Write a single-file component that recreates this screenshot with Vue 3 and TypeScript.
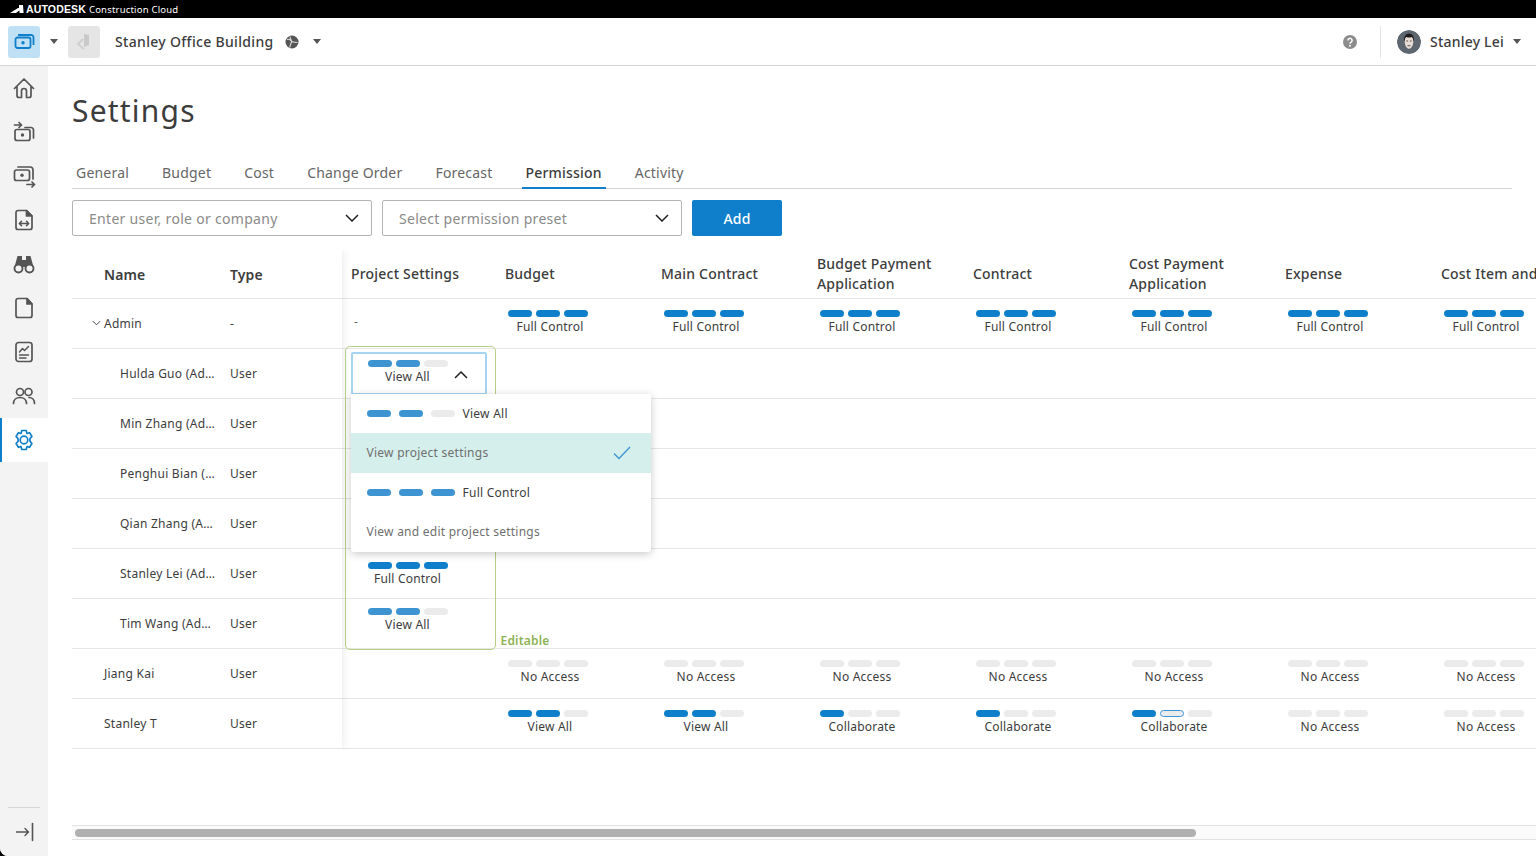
<script setup lang="ts">
type Level = 'none' | 'solid' | 'soft' | 'outline'
interface Perm { label: string; bars: Level[] }
const full: Perm = { label: 'Full Control', bars: ['solid', 'solid', 'solid'] }
const none: Perm = { label: 'No Access', bars: ['none', 'none', 'none'] }
const view: Perm = { label: 'View All', bars: ['solid', 'solid', 'none'] }
const collab: Perm = { label: 'Collaborate', bars: ['solid', 'none', 'none'] }
const collabOut: Perm = { label: 'Collaborate', bars: ['solid', 'outline', 'none'] }
const softView: Level[] = ['soft', 'soft', 'none']

const tabs = ['General', 'Budget', 'Cost', 'Change Order', 'Forecast', 'Permission', 'Activity']
const columns = ['Project Settings', 'Budget', 'Main Contract', 'Budget Payment Application', 'Contract', 'Cost Payment Application', 'Expense', 'Cost Item and']

interface Row { name: string; type: string; indent: 0 | 1 | 2; caret?: boolean; project?: string; cells: (Perm | null)[] }
const empty: (Perm | null)[] = [null, null, null, null, null, null, null]
const rows: Row[] = [
  { name: 'Admin', type: '-', indent: 1, caret: true, project: '-', cells: [full, full, full, full, full, full, full] },
  { name: 'Hulda Guo (Ad…', type: 'User', indent: 2, cells: empty },
  { name: 'Min Zhang (Ad…', type: 'User', indent: 2, cells: empty },
  { name: 'Penghui Bian (…', type: 'User', indent: 2, cells: empty },
  { name: 'Qian Zhang (A…', type: 'User', indent: 2, cells: empty },
  { name: 'Stanley Lei (Ad…', type: 'User', indent: 2, cells: empty },
  { name: 'Tim Wang (Ad…', type: 'User', indent: 2, cells: empty },
  { name: 'Jiang Kai', type: 'User', indent: 1, cells: [none, none, none, none, none, none, none] },
  { name: 'Stanley T', type: 'User', indent: 1, cells: [view, view, collab, collab, collabOut, none, none] },
]
</script>

<template>
  <div class="app">
    <div class="brandbar">
      <svg class="brand-logo" viewBox="0 0 14 8" width="14" height="8"><path d="M0 8 L8 3 L9 3 L9 0 L13 0 L13.6 8 L9.6 8 L9.4 5.6 L6 8 Z" fill="#fff"/></svg>
      <span class="brand-main">AUTODESK</span>
      <span class="brand-sub">Construction Cloud</span>
    </div>

    <header class="topbar">
      <div class="module-btn">
        <svg viewBox="0 0 24 24" width="24" height="24" fill="none" stroke="#0f7fcb" stroke-width="1.8"><rect x="3.5" y="7.5" width="15" height="10.5" rx="2"/><path d="M6 5h13a2.5 2.5 0 0 1 2.5 2.5V15"/><circle cx="11" cy="12.8" r="1.7" fill="#0f7fcb" stroke="none"/></svg>
      </div>
      <span class="caret first"></span>
      <div class="thumb">
        <svg viewBox="0 0 24 24" width="24" height="24"><path d="M12 4l5 1v10l-5 2z" fill="#c9c9c9"/><path d="M11 9l-5 5 6 5" fill="none" stroke="#d0d0d0" stroke-width="2"/></svg>
      </div>
      <span class="project-name">Stanley Office Building</span>
      <svg class="globe" viewBox="0 0 14 14" width="14" height="14"><circle cx="7" cy="7" r="6.5" fill="#555"/><path d="M2 4.5c2.5-1 3.5 1 5 2s3 .5 5.5 1M5 1.5c0 2.500 1.500 3 1.500 5s-2 3.500-1.500 6" fill="none" stroke="#ddd" stroke-width="1.100"/></svg>
      <span class="caret project"></span>
      <div class="spacer"></div>
      <svg class="help" viewBox="0 0 14 14" width="14" height="14"><circle cx="7" cy="7" r="7" fill="#8c8c8c"/><path d="M4.900 5.400a2.100 2.100 0 1 1 3.200 1.800c-.8.5-1.100.8-1.100 1.500" fill="none" stroke="#fff" stroke-width="1.500"/><circle cx="7" cy="10.800" r=".95" fill="#fff"/></svg>
      <div class="divider"></div>
      <svg class="avatar" viewBox="0 0 24 24" width="24" height="24">
        <circle cx="12" cy="12" r="12" fill="#5e6670"/>
        <path d="M7.500 10c0-4 2-5.500 4.500-5.500s4.500 1.500 4.500 5.500l-.5 4c-.5 3-2.500 4.800-4 4.800s-3.500-1.800-4-4.800z" fill="#e8dcd4"/>
        <path d="M7 11c-.5-4.500 2-7.500 5-7.500s5.500 3 5 7.500l-.8-.5c0-2-.7-3-1.700-3.500-1.500.8-3.500.8-5 0-1 .5-1.700 1.500-1.700 3.500z" fill="#1d1d1f"/>
        <path d="M9.300 11h1.800M12.900 11h1.800M10.500 15.700h3" stroke="#333" stroke-width=".8"/>
      </svg>
      <span class="user-name">Stanley Lei</span>
      <span class="caret user"></span>
    </header>

    <div class="body">
      <aside class="sidebar">
        <div class="nav-item"><svg viewBox="0 0 24 24" width="24" height="24"><path d="M2.500 12.500 12 3l9.500 9.500M5 10.500v9a2 2 0 0 0 2 2h2.500v-6.500a2.500 2.500 0 0 1 5 0v6.500H17a2 2 0 0 0 2-2v-9"/></svg></div>
        <div class="nav-item"><svg viewBox="0 0 24 24" width="24" height="24"><rect x="3" y="9.500" width="15" height="11" rx="2"/><path d="M21.500 18V10a2.500 2.500 0 0 0-2.500-2.500H13M2.500 5h7M7 2.500 9.500 5 7 7.500"/><circle cx="10.500" cy="15" r="1.700" fill="#555" stroke="none"/></svg></div>
        <div class="nav-item"><svg viewBox="0 0 24 24" width="24" height="24"><rect x="2.500" y="6" width="15" height="10.500" rx="2"/><path d="M6 3h12a3 3 0 0 1 3 3v9M15 20.500h7.500M20 18l2.500 2.500L20 23"/><circle cx="10" cy="11.200" r="1.700" fill="#555" stroke="none"/></svg></div>
        <div class="nav-item"><svg viewBox="0 0 24 24" width="24" height="24"><path d="M14.500 2.500H6A2 2 0 0 0 4 4.500v15a2 2 0 0 0 2 2h12a2 2 0 0 0 2-2V8z"/><path d="M14.500 2.500 20 8h-5.500z" fill="#555"/><path d="M7.500 15.500h9M9.500 13.300l-2.200 2.200 2.200 2.200M14.500 13.300l2.200 2.200-2.200 2.200" stroke-width="1.500"/></svg></div>
        <div class="nav-item"><svg viewBox="0 0 24 24" width="24" height="24"><path d="M5.500 4h4.500v11H2.500zM14 4h4.500l3 11H14zM10 8h4v7h-4z" fill="#555" stroke="none"/><circle cx="6.500" cy="16.500" r="4" fill="#f3f3f3" stroke-width="1.900"/><circle cx="17.500" cy="16.500" r="4" fill="#f3f3f3" stroke-width="1.900"/></svg></div>
        <div class="nav-item"><svg viewBox="0 0 24 24" width="24" height="24"><path d="M15 2.500H6A2 2 0 0 0 4 4.500v15a2 2 0 0 0 2 2h12a2 2 0 0 0 2-2V8z"/><path d="M15 2.500 20 8h-5z" fill="#555"/></svg></div>
        <div class="nav-item"><svg viewBox="0 0 24 24" width="24" height="24"><rect x="4" y="2.500" width="16" height="19" rx="2.500"/><path d="M7.500 12l3-3.500 2 2 4-4M7.500 15h9M7.500 18h6.500" stroke-width="1.500"/></svg></div>
        <div class="nav-item"><svg viewBox="0 0 24 24" width="24" height="24"><circle cx="8" cy="8" r="3.500"/><circle cx="16.500" cy="8" r="3.500"/><path d="M1.500 19.500c0-3.600 2.800-6 6.500-6s6.500 2.400 6.500 6M17 13.500c3.200 0 5.500 2.400 5.500 6"/></svg></div>
        <div class="nav-item active"><svg viewBox="0 0 24 24" width="24" height="24"><path d="M9.800 2.500h4.400l.8 3 2.600-.8 2.300 3.700-2 2.300.1 2.600 1.900 2.300-2.300 3.700-2.600-.8-.8 3H9.800l-.8-3-2.600.8-2.300-3.700 2-2.300-.1-2.600-1.900-2.300 2.300-3.700 2.600.8z"/><circle cx="12" cy="12" r="3.800"/></svg></div>
        <div class="spacer"></div>
        <div class="collapse">
          <svg viewBox="0 0 20 20" width="20" height="20"><path d="M1.500 10h12M10 6.500l3.500 3.500-3.500 3.500" stroke-width="1.400"/><path d="M17.500 1.500v17" stroke-width="1.600"/></svg>
        </div>
      </aside>

      <main class="main">
        <h1 class="title">Settings</h1>
        <nav class="tabs">
          <div v-for="tab in tabs" :key="tab" class="tab" :class="{ current: tab === 'Permission' }">{{ tab }}</div>
        </nav>

        <div class="filters">
          <div class="select"><span>Enter user, role or company</span><svg viewBox="0 0 14 8" width="14" height="8"><path d="M1 1l6 6 6-6" fill="none" stroke="#222" stroke-width="1.500"/></svg></div>
          <div class="select"><span>Select permission preset</span><svg viewBox="0 0 14 8" width="14" height="8"><path d="M1 1l6 6 6-6" fill="none" stroke="#222" stroke-width="1.500"/></svg></div>
          <button class="add">Add</button>
        </div>

        <section class="table">
          <div class="frozen">
            <div class="f-head">
              <div class="f-name">Name</div>
              <div class="f-type">Type</div>
            </div>
            <div v-for="row in rows" :key="row.name" class="f-row">
              <div class="f-name" :class="{ deep: row.indent === 2 }">
                <svg v-if="row.caret" class="row-caret" viewBox="0 0 10 6" width="9" height="6"><path d="M1 1l4 4 4-4" fill="none" stroke="#444" stroke-width="1.100"/></svg>
                {{ row.name }}
              </div>
              <div class="f-type">{{ row.type }}</div>
            </div>
          </div>

          <div class="scroller">
            <div class="s-head">
              <div v-for="(col, i) in columns" :key="col" class="s-col" :class="{ firstcol: i === 0 }">{{ col }}</div>
            </div>
            <div v-for="row in rows" :key="row.name" class="s-row">
              <div class="s-cell project-cell">{{ row.project }}</div>
              <div v-for="(cell, i) in row.cells" :key="i" class="s-cell">
                <div v-if="cell" class="perm">
                  <div class="bars">
                    <span v-for="(b, j) in cell.bars" :key="j" class="bar" :class="b"></span>
                  </div>
                  <div class="perm-label">{{ cell.label }}</div>
                </div>
              </div>
            </div>
          </div>

          <div class="editable">
            <div class="picker">
              <div class="picker-value">
                <div class="bars"><span v-for="(b, j) in softView" :key="j" class="bar" :class="b"></span></div>
                <div class="picker-label">View All</div>
              </div>
              <svg class="picker-chevron" viewBox="0 0 14 8" width="14" height="8"><path d="M1 7l6-6 6 6" fill="none" stroke="#222" stroke-width="1.500"/></svg>
            </div>
            <div class="inline-perm full-row">
              <div class="bars"><span class="bar solid"></span><span class="bar solid"></span><span class="bar solid"></span></div>
              <div class="picker-label">Full Control</div>
            </div>
            <div class="inline-perm view-row">
              <div class="bars"><span v-for="(b, j) in softView" :key="j" class="bar" :class="b"></span></div>
              <div class="picker-label">View All</div>
            </div>
            <span class="editable-tag">Editable</span>

            <div class="menu">
              <div class="menu-item">
                <div class="menu-bars"><span class="bar soft"></span><span class="bar soft"></span><span class="bar none"></span></div>
                <span>View All</span>
              </div>
              <div class="menu-item selected">
                <span class="muted">View project settings</span>
                <svg viewBox="0 0 18 14" width="18" height="14"><path d="M1 7.500l5 5L17 1" fill="none" stroke="#3d94d1" stroke-width="1.300"/></svg>
              </div>
              <div class="menu-item">
                <div class="menu-bars"><span class="bar soft"></span><span class="bar soft"></span><span class="bar soft"></span></div>
                <span>Full Control</span>
              </div>
              <div class="menu-item"><span class="muted">View and edit project settings</span></div>
            </div>
          </div>
        </section>

        <div class="scrolltrack"><div class="scrollthumb"></div></div>
      </main>
    </div>
  </div>
</template>

<style>
html, body { margin: 0; padding: 0; background: #000; }
</style>

<style scoped>
* { box-sizing: border-box; }
.app {
  width: 1536px; height: 856px; display: flex; flex-direction: column; overflow: hidden;
  background: #fff; border-radius: 0 0 0 8px; color: #3c3c3c;
  font-family: "Noto Sans", "Open Sans", sans-serif; font-size: 12px;
}
.brandbar { height: 18px; background: #000; color: #fff; display: flex; align-items: center; padding-left: 10px; flex: none; }
.brand-logo { margin-right: 2px; }
.brand-main { font: 700 10.5px "Liberation Sans", sans-serif; letter-spacing: .15px; margin-right: 3px; }
.brand-sub { font-size: 9.500px; letter-spacing: .2px; }

.topbar { height: 48px; flex: none; display: flex; align-items: center; padding-left: 8px; border-bottom: 1px solid #d4d4d4; }
.module-btn { width: 32px; height: 32px; border-radius: 3px; background: #bfe0f5; display: flex; align-items: center; justify-content: center; }
.caret { width: 0; height: 0; border-left: 4px solid transparent; border-right: 4px solid transparent; border-top: 5px solid #555; }
.caret.first { margin: 0 10px; }
.caret.project { margin-left: 14px; }
.caret.user { margin: 0 15px 0 9px; }
.thumb { width: 32px; height: 32px; border-radius: 3px; background: #e5e5e5; display: flex; align-items: center; justify-content: center; }
.project-name { margin-left: 15px; font-size: 14px; font-weight: 500; letter-spacing: .32px; color: #3c3c3c; }
.globe { margin-left: 11px; }
.spacer { flex: 1; }
.divider { width: 1px; height: 32px; background: #e4e4e4; margin: 0 16px 0 23px; }
.help { margin-right: 0; }
.avatar { border-radius: 50%; }
.user-name { margin-left: 9px; font-size: 14px; font-weight: 500; letter-spacing: .2px; }

.body { flex: 1; display: flex; min-height: 0; }
.sidebar { width: 48px; flex: none; background: #f3f3f3; display: flex; flex-direction: column; padding-top: 0; }
.nav-item { height: 44px; display: flex; align-items: center; justify-content: center; position: relative; }
.nav-item svg, .collapse svg { fill: none; stroke: #555; stroke-width: 1.700; stroke-linejoin: round; stroke-linecap: round; }
.nav-item.active { background: #fff; }
.nav-item.active::before { content: ""; position: absolute; left: 0; top: 0; bottom: 0; width: 2px; background: #0f7fcb; }
.nav-item.active svg { stroke: #0f7fcb; }
.collapse { margin: 0 8px; border-top: 1px solid #d6d6d6; height: 49px; display: flex; align-items: center; justify-content: center; }
.collapse svg { margin-left: 2px; }

.main { flex: 1; min-width: 0; padding-left: 24px; display: flex; flex-direction: column; }
.title { margin: 26px 0 0; font-size: 30px; font-weight: 400; line-height: 38px; letter-spacing: 1.200px; color: #3c3c3c; }
.tabs { margin-top: 27px; width: 1440px; display: flex; gap: 25px; border-bottom: 1px solid #d4d4d4; height: 32px; }
.tab { padding: 0 4px; min-width: 38px; height: 32px; line-height: 31px; font-size: 14px; letter-spacing: .2px; text-align: center; color: #666; }
.tab.current { color: #3c3c3c; font-weight: 500; border-bottom: 2px solid #0f7fcb; }
.filters { margin-top: 11px; display: flex; gap: 10px; height: 36px; flex: none; }
.select { width: 300px; height: 36px; border: 1px solid #b4b4b4; border-radius: 2px; padding: 0 12px 0 16px; display: flex; align-items: center; justify-content: space-between; font-size: 14px; letter-spacing: .3px; color: #8a8a8a; }
.add { width: 90px; height: 36px; border: 0; border-radius: 2px; background: #0f7fcb; color: #fff; font: 500 14px "Noto Sans", sans-serif; letter-spacing: .2px; }

.table { position: relative; margin-top: 14px; display: flex; height: 499px; flex: none; overflow: hidden; }
.frozen { width: 270px; flex: none; position: relative; z-index: 2; background: #fff; box-shadow: 0 0 10px rgba(0, 0, 0, .1); clip-path: inset(0 -16px 0 0); }
.f-head { height: 49px; display: flex; align-items: center; border-bottom: 1px solid #e6e6e6; font-size: 14px; font-weight: 600; color: #3c3c3c; letter-spacing: .1px; }
.f-row { height: 50px; display: flex; align-items: center; border-bottom: 1px solid #e6e6e6; letter-spacing: .25px; }
.f-name { width: 158px; padding-left: 32px; position: relative; white-space: nowrap; }
.f-name.deep { padding-left: 48px; }
.f-type { flex: 1; }
.row-caret { position: absolute; left: 20px; top: 5px; }

.scroller { flex: 1; min-width: 0; overflow: hidden; }
.s-head { height: 49px; display: flex; align-items: center; border-bottom: 1px solid #e6e6e6; width: 1248px; }
.s-col { width: 156px; flex: none; padding: 0 7px; font-size: 14px; font-weight: 500; letter-spacing: .2px; line-height: 20px; white-space: pre-line; color: #3c3c3c; }
.s-col.firstcol { padding-left: 9px; }
.s-row { height: 50px; display: flex; border-bottom: 1px solid #e6e6e6; width: 1248px; }
.s-cell { width: 156px; flex: none; padding: 11px 0 0 10px; }
.project-cell { padding: 14px 0 0 12px; color: #666; }
.perm { width: 84px; }
.perm-label { margin-top: 3px; text-align: center; line-height: 14px; letter-spacing: .2px; white-space: nowrap; }
.bars { display: flex; gap: 4px; width: 80px; }
.bar { width: 24px; height: 7px; border-radius: 4px; flex: none; }
.bar.none { background: #ebebeb; }
.bar.solid { background: #0f7fcb; }
.bar.soft { background: #3d94d1; }
.bar.outline { background: #ebebeb; border: 1px solid #3d94d1; }

.editable { position: absolute; left: 273px; top: 96px; width: 151px; height: 304px; border: 1.500px solid #b5cf84; border-radius: 5px; z-index: 3; }
.picker { position: absolute; left: 4.500px; top: 4.500px; width: 136px; height: 43px; border: 2px solid #a5d5f2; border-radius: 2px; background: #fff; }
.picker-value { position: absolute; left: 15px; top: 6px; width: 80px; }
.picker-label { margin-top: 3px; width: 80px; text-align: center; line-height: 14px; letter-spacing: .2px; white-space: nowrap; }
.picker-chevron { position: absolute; left: 101px; top: 17px; }
.inline-perm { position: absolute; left: 21.500px; width: 80px; }
.full-row { top: 214.500px; }
.view-row { top: 260.500px; }
.editable-tag { position: absolute; left: 154.500px; top: 286px; color: #8db255; font-size: 12px; font-weight: 600; line-height: 16px; letter-spacing: .2px; }
.menu { position: absolute; left: 4.500px; top: 46.500px; width: 300px; background: #fff; border-radius: 0 0 3px 3px; box-shadow: 0 2px 8px rgba(0, 0, 0, .22); z-index: 4; }
.menu-item { height: 39.500px; padding: 0 20px 0 16px; display: flex; align-items: center; letter-spacing: .25px; }
.menu-item.selected { background: #d5f0ec; justify-content: space-between; }
.menu-bars { display: flex; gap: 8px; margin-right: 8px; }
.muted { color: #6f6f6f; }

.scrolltrack { margin-top: auto; margin-bottom: 16px; height: 15px; flex: none; background: #fafafa; border-top: 1px solid #e2e2e2; border-bottom: 1px solid #e2e2e2; padding: 3px 0 0 3px; }
.scrollthumb { width: 1121px; height: 8px; border-radius: 4px; background: #b0b0b0; }
</style>
